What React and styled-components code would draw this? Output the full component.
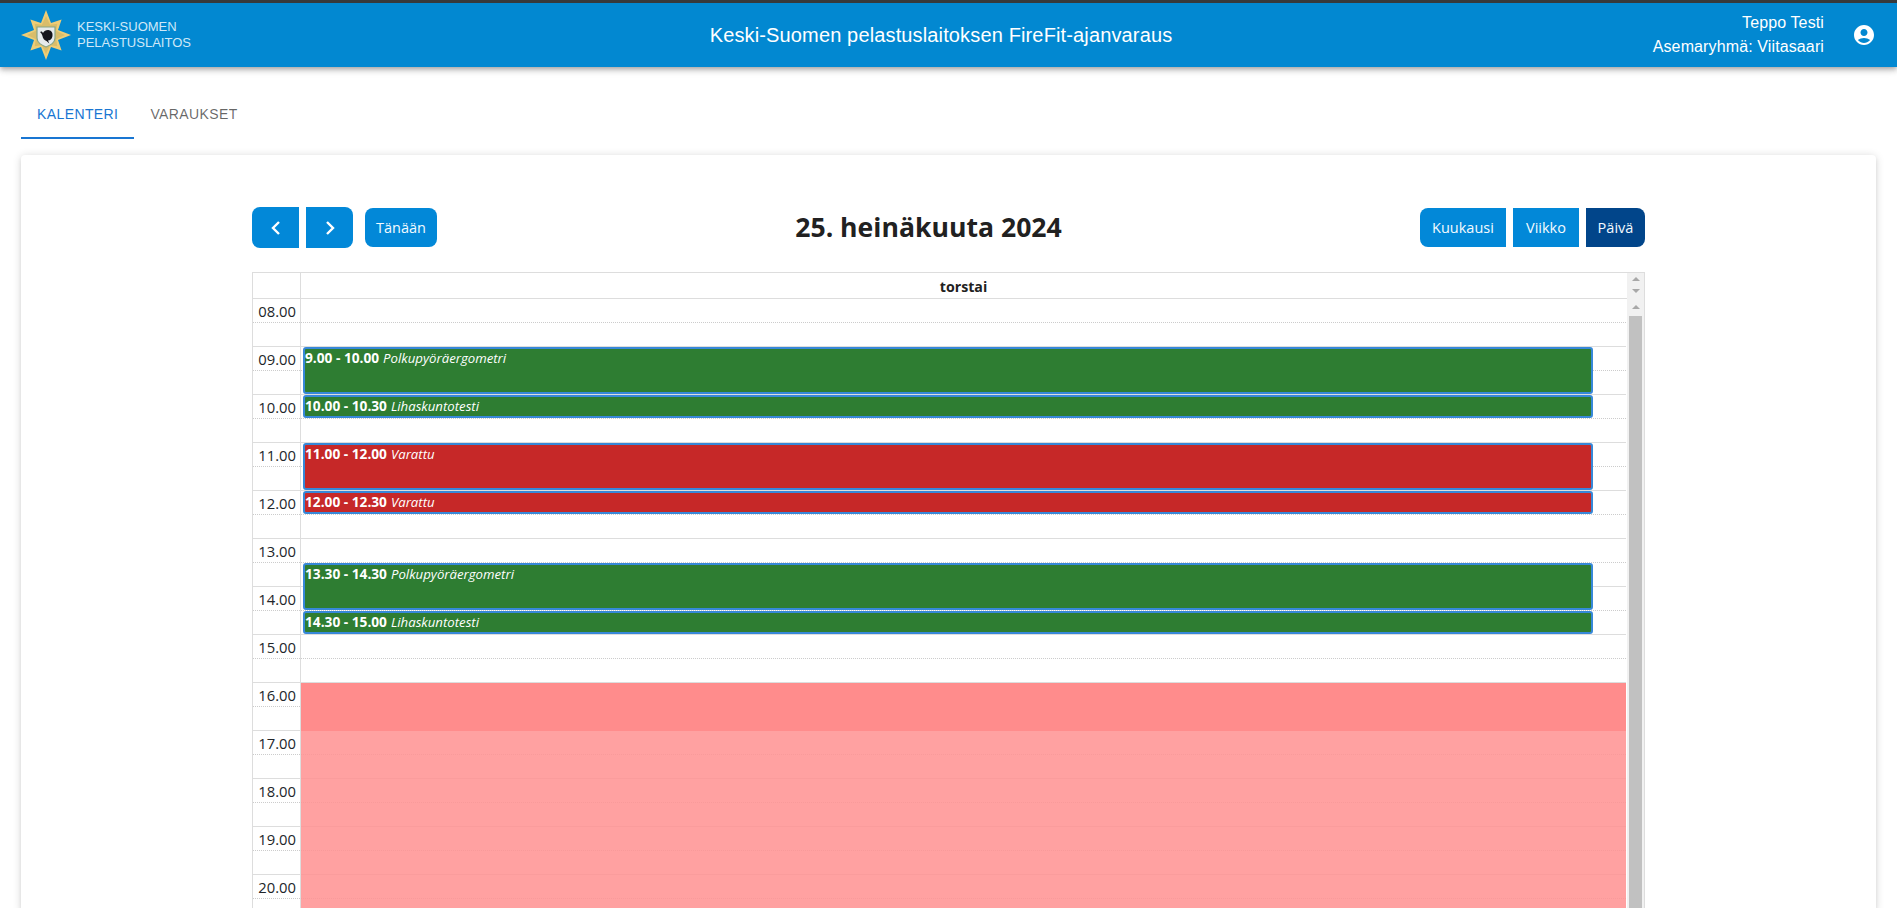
import React from "react";
import styled, { createGlobalStyle } from "styled-components";

const GlobalStyle = createGlobalStyle`
  html, body {
    margin: 0;
    padding: 0;
    height: 908px;
    overflow: hidden;
    background: #fff;
  }
  * { box-sizing: border-box; }
`;

const CAL_FONT = `"Open Sans", "Noto Sans", sans-serif`;
const UI_FONT = `"Liberation Sans", Arial, sans-serif`;
const SLOT = 24;

const Header = styled.header`
  height: 67px;
  border-top: 3px solid #37393b;
  background: #0288d1;
  color: #fff;
  font-family: ${UI_FONT};
  display: grid;
  grid-template-columns: 1fr auto 1fr;
  align-items: center;
  padding: 0 21px;
  box-shadow: 0 2px 4px -1px rgba(0,0,0,.2), 0 4px 5px 0 rgba(0,0,0,.14), 0 1px 10px 0 rgba(0,0,0,.12);
  position: relative;
`;

const Brand = styled.div`
  display: flex;
  align-items: center;
  gap: 6px;
`;

const BrandText = styled.div`
  font-size: 13px;
  line-height: 16px;
  color: #cfe8f8;
`;

const HeaderTitle = styled.div`
  font-size: 20px;
  letter-spacing: 0.14px;
  text-align: center;
  margin-right: 15px;
`;

const UserBox = styled.div`
  display: flex;
  justify-content: flex-end;
  align-items: center;
  gap: 28px;
`;

const UserText = styled.div`
  text-align: right;
  font-size: 16px;
  letter-spacing: 0.12px;
  line-height: 24px;
`;

const TabBar = styled.nav`
  display: flex;
  margin: 24px 21px 0;
  font-family: ${UI_FONT};
`;

const Tab = styled.div`
  height: 48px;
  padding: 0 16px;
  display: flex;
  align-items: center;
  font-size: 14px;
  letter-spacing: 0.4px;
  text-transform: uppercase;
  color: ${(p) => (p.$active ? "#1976d2" : "rgba(0,0,0,.6)")};
  border-bottom: 2px solid ${(p) => (p.$active ? "#1976d2" : "transparent")};
`;

const Card = styled.main`
  margin: 16px 21px 0;
  padding: 52px 231px 0;
  background: #fff;
  border-radius: 4px;
  box-shadow: 0 1px 8px rgba(0,0,0,.16), 0 3px 4px rgba(0,0,0,.06);
  font-family: ${CAL_FONT};
  color: #212529;
`;

const Toolbar = styled.div`
  display: flex;
  justify-content: space-between;
  align-items: center;
  height: 41px;
  margin-bottom: 24px;
`;

const ButtonRow = styled.div`
  display: flex;
  align-items: center;
  gap: ${(p) => p.$gap || 7}px;
`;

const CalButton = styled.button`
  font: 400 14.5px/1.5 ${CAL_FONT};
  width: ${(p) => p.$width}px;
  height: 39px;
  padding: 0;
  border: 0;
  color: #f4fbff;
  background: ${(p) => (p.$active ? "#01458a" : "#0288d8")};
  border-radius: ${(p) => p.$radius || "0"};
`;

const ArrowButton = styled(CalButton)`
  width: 47px;
  height: 41px;
  display: flex;
  align-items: center;
  justify-content: center;
`;

const Title = styled.h2`
  margin: 0;
  font-size: 26.6px;
  line-height: 1.2;
  font-weight: 700;
  color: #212121;
`;

const Grid = styled.div`
  border: 1px solid #ddd;
  border-bottom: 0;
  height: 640px;
  overflow: hidden;
`;

const HeadRow = styled.div`
  display: grid;
  grid-template-columns: 48px 1fr 18px;
  height: 26px;
  border-bottom: 1px solid #ddd;
`;

const AxisHead = styled.div`
  border-right: 1px solid #ddd;
`;

const DayHead = styled.div`
  text-align: center;
  font-size: 14.2px;
  font-weight: 700;
  line-height: 28px;
  color: #212121;
`;

const ScrollTrack = styled.div`
  background: #f1f1f1;
  margin-left: 1px;
  display: flex;
  flex-direction: column;
  align-items: center;
  padding-top: ${(p) => p.$top}px;
  gap: 8px;
`;

const ArrowUp = styled.i`
  width: 0;
  height: 0;
  border-left: 4px solid transparent;
  border-right: 4px solid transparent;
  border-bottom: 4px solid #a8a8a8;
`;

const ArrowDown = styled(ArrowUp)`
  border-bottom: 0;
  border-top: 4px solid #a8a8a8;
`;

const Thumb = styled.div`
  width: 13px;
  flex: 1;
  margin-top: -1px;
  background: #c1c1c1;
`;

const Body = styled.div`
  display: grid;
  grid-template-columns: 48px 1fr 18px;
  height: 620px;
`;

const Axis = styled.div`
  border-right: 1px solid #ddd;
`;

const AxisCell = styled.div`
  height: ${SLOT}px;
  border-bottom: 1px ${(p) => (p.$half ? "solid" : "dotted")} ${(p) => (p.$half ? "#ddd" : "#ccc")};
  font-size: 14.8px;
  line-height: 24px;
  text-align: right;
  padding-right: 4px;
  color: #212529;
`;

const Lane = styled.div`
  position: relative;
`;

const SlotLine = styled.div`
  height: ${SLOT}px;
  border-bottom: 1px ${(p) => (p.$half ? "solid" : "dotted")} ${(p) => (p.$half ? "#ddd" : "#ccc")};
`;

const Closed = styled.div`
  position: absolute;
  left: 0;
  right: 0;
  background: ${(p) => (p.$strong ? "#ff8c8c" : "rgba(255,145,145,.86)")};
`;

const Event = styled.div`
  position: absolute;
  left: 2px;
  right: 2.5%;
  padding: 0;
  border: 2px solid #3788d8;
  border-radius: 3px;
  background: ${(p) => (p.$booked ? "#c62828" : "#2e7d32")};
  color: #fff;
  font-size: 13.2px;
  line-height: 18px;
  overflow: hidden;
  white-space: nowrap;
`;

const EventTime = styled.b`
  font-size: 13.7px;
  font-weight: 700;
`;

const EventName = styled.em`
  font-style: italic;
  margin-left: 4px;
`;

const slots = [];
for (let h = 8; h <= 20; h++) {
  slots.push(h);
}

const events = [
  { start: 9, end: 10, time: "9.00 - 10.00", name: "Polkupyöräergometri" },
  { start: 10, end: 10.5, time: "10.00 - 10.30", name: "Lihaskuntotesti" },
  { start: 11, end: 12, time: "11.00 - 12.00", name: "Varattu", booked: true },
  { start: 12, end: 12.5, time: "12.00 - 12.30", name: "Varattu", booked: true },
  { start: 13.5, end: 14.5, time: "13.30 - 14.30", name: "Polkupyöräergometri" },
  { start: 14.5, end: 15, time: "14.30 - 15.00", name: "Lihaskuntotesti" },
];

const yOf = (h) => (h - 8) * SLOT * 2;

// eight pointed badge star, long points on the axes
const starPoints = (long, short, inner) => {
  const pts = [];
  for (let i = 0; i < 16; i++) {
    const a = (i * Math.PI) / 8 - Math.PI / 2;
    const r = i % 2 ? inner : i % 4 === 0 ? long : short;
    pts.push(`${(25 + r * Math.cos(a)).toFixed(1)},${(25 + r * Math.sin(a)).toFixed(1)}`);
  }
  return pts.join(" ");
};

function Logo() {
  return (
    <svg width="50" height="50" viewBox="0 0 50 50">
      <polygon points={starPoints(25, 22, 13)} fill="#efcd76" />
      <polygon points={starPoints(19, 16, 11)} fill="#d9bd6a" />
      <path d="M16 17 H34 V28 C34 33 29.500 35 25 37 C20.500 35 16 33 16 28 Z" fill="#e6eaea" stroke="#8aa583" strokeWidth="1.200" />
      <path d="M19 22 C20.200 21 21.500 21.500 22 23 C23 21 25.500 19.800 28 20.200 C31 20.700 32 23.500 31.400 26.500 C30.900 29 29 30.500 27 30.500 L28.300 33.500 L25.500 31 C23.500 30.500 21.800 28.500 21.300 25.500 C20.900 24 20 23 19 22 Z" fill="#14141a" />
    </svg>
  );
}

function AccountIcon() {
  return (
    <svg width="24" height="24" viewBox="0 0 24 24" fill="#fff">
      <path d="M12 2C6.48 2 2 6.48 2 12s4.48 10 10 10 10-4.48 10-10S17.52 2 12 2zm0 4c1.93 0 3.5 1.57 3.5 3.5S13.93 13 12 13s-3.5-1.57-3.500-3.500S10.070 6 12 6zm0 14c-2.030 0-4.430-.82-6.140-2.880C7.550 15.800 9.680 15 12 15s4.450.8 6.140 2.120C16.430 19.180 14.030 20 12 20z" />
    </svg>
  );
}

function Chevron({ dir }) {
  return (
    <svg width="14" height="16" viewBox="0 0 14 16" fill="none" stroke="#fff" strokeWidth="2.400">
      <path d={dir === "left" ? "M10 2 L4 8 L10 14" : "M4 2 L10 8 L4 14"} />
    </svg>
  );
}

export default function App() {
  return (
    <>
      <GlobalStyle />
      <Header>
        <Brand>
          <Logo />
          <BrandText>
            KESKI-SUOMEN
            <br />
            PELASTUSLAITOS
          </BrandText>
        </Brand>
        <HeaderTitle>Keski-Suomen pelastuslaitoksen FireFit-ajanvaraus</HeaderTitle>
        <UserBox>
          <UserText>
            Teppo Testi
            <br />
            Asemaryhmä: Viitasaari
          </UserText>
          <AccountIcon />
        </UserBox>
      </Header>

      <TabBar>
        <Tab $active>Kalenteri</Tab>
        <Tab>Varaukset</Tab>
      </TabBar>

      <Card>
        <Toolbar>
          <ButtonRow $gap={12}>
            <ButtonRow>
              <ArrowButton $radius="8px 0 0 8px">
                <Chevron dir="left" />
              </ArrowButton>
              <ArrowButton $radius="0 8px 8px 0">
                <Chevron dir="right" />
              </ArrowButton>
            </ButtonRow>
            <CalButton $width={72} $radius="8px">Tänään</CalButton>
          </ButtonRow>
          <Title>25. heinäkuuta 2024</Title>
          <ButtonRow>
            <CalButton $width={86} $radius="8px 0 0 8px">Kuukausi</CalButton>
            <CalButton $width={66}>Viikko</CalButton>
            <CalButton $width={59} $active $radius="0 8px 8px 0">Päivä</CalButton>
          </ButtonRow>
        </Toolbar>

        <Grid>
          <HeadRow>
            <AxisHead />
            <DayHead>torstai</DayHead>
            <ScrollTrack $top={4}>
              <ArrowUp />
              <ArrowDown />
            </ScrollTrack>
          </HeadRow>
          <Body>
            <Axis>
              {slots.map((h) => (
                <React.Fragment key={h}>
                  <AxisCell>{String(h).padStart(2, "0")}.00</AxisCell>
                  <AxisCell $half />
                </React.Fragment>
              ))}
            </Axis>
            <Lane>
              {slots.map((h) => (
                <React.Fragment key={h}>
                  <SlotLine />
                  <SlotLine $half />
                </React.Fragment>
              ))}
              <Closed $strong style={{ top: yOf(16), height: SLOT * 2 }} />
              <Closed style={{ top: yOf(17), height: SLOT * 8 }} />
              {events.map((ev) => (
                <Event
                  key={ev.time}
                  $booked={ev.booked}
                  style={{ top: yOf(ev.start), height: (ev.end - ev.start) * SLOT * 2 - 1 }}
                >
                  <EventTime>{ev.time}</EventTime>
                  <EventName>{ev.name}</EventName>
                </Event>
              ))}
            </Lane>
            <ScrollTrack $top={6}>
              <ArrowUp />
              <Thumb />
            </ScrollTrack>
          </Body>
        </Grid>
      </Card>
    </>
  );
}
